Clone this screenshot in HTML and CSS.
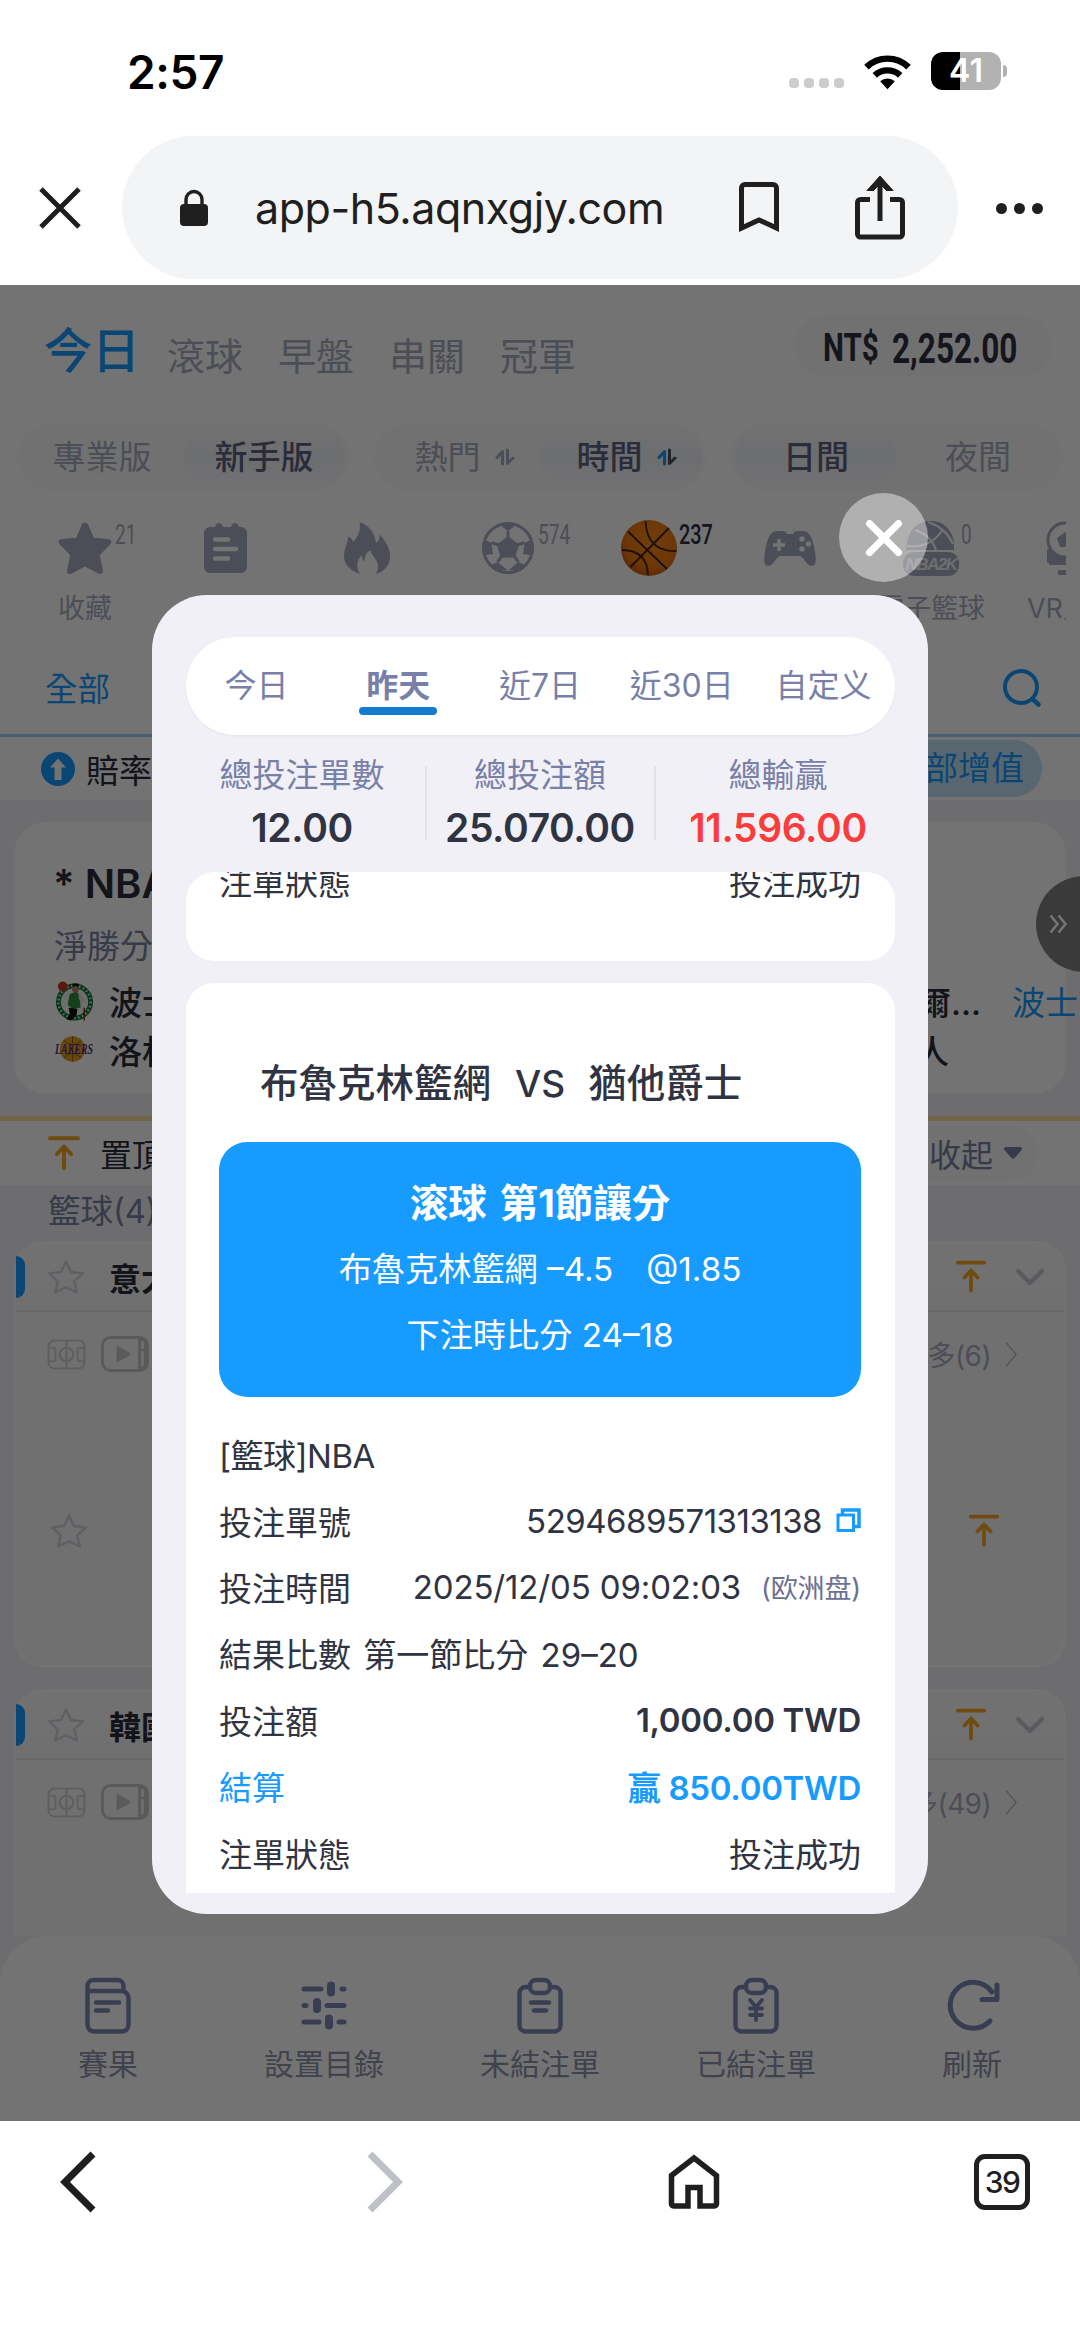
FILE: index.html
```html
<!DOCTYPE html>
<html lang="zh-Hant">
<head>
<meta charset="utf-8">
<title>已結注單</title>
<link rel="stylesheet" href="styles.css">
</head>
<body>
<svg class="defs" aria-hidden="true">
  <symbol id="star-line" viewBox="0 0 40 35"><path d="M20 2.500l5 10.600 12 1.300-8.800 8 2.600 11L20 28.500 9.200 33.400l2.600-11L3 14.400l12-1.300z" fill="none" stroke="currentColor" stroke-width="2.500" stroke-linejoin="round"/></symbol>
  <symbol id="to-top" viewBox="0 0 32 34"><path d="M2 2.200h28M16 32V11M9 18l7-7.500 7 7.500" fill="none" stroke="currentColor" stroke-width="4" stroke-linecap="round" stroke-linejoin="round"/></symbol>
  <symbol id="chev-down" viewBox="0 0 30 18"><path d="M3 3l12 12L27 3" fill="none" stroke="currentColor" stroke-width="4.500" stroke-linecap="round" stroke-linejoin="round"/></symbol>
  <symbol id="chev-right" viewBox="0 0 14 28"><path d="M1 1l11 13L1 27" fill="none" stroke="currentColor" stroke-width="1.600"/></symbol>
  <symbol id="pitch" viewBox="0 0 40 32"><g fill="none" stroke="currentColor" stroke-width="2.200"><rect x="1.500" y="1.500" width="37" height="29" rx="6"/><circle cx="20" cy="16" r="7"/><path d="M20 2v28M2 9h4.500a2 2 0 0 1 2 2v10a2 2 0 0 1-2 2H2M38 9h-4.500a2 2 0 0 0-2 2v10a2 2 0 0 0 2 2H38"/></g></symbol>
  <symbol id="play" viewBox="0 0 48 36"><rect x="1.500" y="1.500" width="45" height="33" rx="8" fill="none" stroke="currentColor" stroke-width="2.800"/><path d="M37 1h3a7 7 0 0 1 7 7v20a7 7 0 0 1-7 7h-3z" fill="currentColor"/><path d="M41.500 6v6M41.500 16v13" stroke="#f8f8f8" stroke-width="2.600" stroke-linecap="round"/><path d="M15.500 11.500v13q0 2 2 1l11-6q2-1.500 0-2.800l-11-6.200q-2-1-2 1z" fill="currentColor"/></symbol>
  <symbol id="swap" viewBox="0 0 20 18"><path d="M2 9.500L7.500 3.500V16" fill="none" stroke="currentColor" stroke-width="3" stroke-linecap="round" stroke-linejoin="round"/><path d="M12.500 2v13.500L18 10" fill="none" stroke-width="3" stroke-linecap="round" stroke-linejoin="round"/></symbol>
</svg>

<header class="status">
  <span class="clock">2:57</span>
  <div class="signals">
    <span class="cell"><i></i><i></i><i></i><i></i></span>
    <svg class="wifi" viewBox="0 0 48 36"><g fill="none" stroke="#000" stroke-width="6.500"><path d="M2.500 13a31 31 0 0 1 43 0"/><path d="M11 21.500a19 19 0 0 1 26 0"/></g><path d="M24 35.500l-7.500-8a11 11 0 0 1 15 0z"/></svg>
    <span class="battery"><b>41</b></span><span class="tip"></span>
  </div>
</header>

<div class="address">
  <svg class="quit" viewBox="0 0 44 44"><path d="M3 3l38 38M41 3L3 41" stroke="#1f1f1f" stroke-width="5"/></svg>
  <div class="url">
    <svg class="lock" viewBox="0 0 28 36"><rect y="14" width="28" height="22" rx="4" fill="#1f1f1f"/><path d="M6 15V9.500a8 8 0 0 1 16 0V15" fill="none" stroke="#1f1f1f" stroke-width="3.400"/></svg>
    <span class="host">app-h5.aqnxgjy.com</span>
    <svg class="mark" viewBox="0 0 40 50"><path d="M2.500 46V6a3.500 3.500 0 0 1 3.500-3.500h28A3.500 3.500 0 0 1 37.500 6v40L20 38z" fill="none" stroke="#1f1f1f" stroke-width="5"/></svg>
    <svg class="share" viewBox="0 0 50 64"><path d="M15 23.500H5.500a3 3 0 0 0-3 3V58a3 3 0 0 0 3 3h39a3 3 0 0 0 3-3V26.500a3 3 0 0 0-3-3H35M25 45V6" fill="none" stroke="#1f1f1f" stroke-width="5"/><path d="M25 0l13 14.500h-6.500L25 8l-6.500 6.500H12z" fill="#1f1f1f" stroke="#1f1f1f" stroke-width="1"/></svg>
  </div>
  <span class="more"><i></i><i></i><i></i></span>
</div>

<main class="app">
  <nav class="kinds">
    <span class="on">今日</span><span>滾球</span><span>早盤</span><span>串關</span><span>冠軍</span>
    <div class="wallet"><b class="cur">NT$</b><b class="sum">2,252.00</b></div>
  </nav>

  <div class="segments">
    <div class="seg"><span>專業版</span><span class="on">新手版</span></div>
    <div class="seg sort"><span>熱門<svg class="swap"><use href="#swap"/></svg></span><span class="on">時間<svg class="swap lit"><use href="#swap"/></svg></span></div>
    <div class="seg"><span class="on">日間</span><span>夜間</span></div>
  </div>

  <div class="sports">
    <div class="sport">
      <svg viewBox="0 0 56 56"><path d="M28 2.500c1.800 0 2.600 1 3.300 2.600l5.500 12.700 14.400 1.300c3.500.3 4.300 3 2 5.300L42.800 35l3 15c.6 3.500-1.500 5-4.500 3.400L28 46.500l-13.300 6.900c-3 1.600-5.100.1-4.500-3.400l3-15L2.800 24.400c-2.300-2.300-1.500-5 2-5.300l14.400-1.300 5.500-12.700c.7-1.600 1.500-2.600 3.300-2.600z" fill="currentColor"/></svg>
      <b class="badge">21</b><span>收藏</span>
    </div>
    <div class="sport">
      <svg viewBox="0 0 56 56"><path d="M12 7h5q1-4 4-4t4 4h8q1-4 4-4t4 4h2a6 6 0 0 1 6 6v34a6 6 0 0 1-6 6H12a6 6 0 0 1-6-6V13a6 6 0 0 1 6-6z" fill="currentColor"/><path d="M17 19.500h13M17 29h21M17 38.500h13" stroke="#fff" stroke-width="4.500" stroke-linecap="round"/></svg>
    </div>
    <div class="sport">
      <svg viewBox="0 0 56 56"><path d="M21 54C9 50 3 42 5.500 31c1-4.500 3.500-8 3.500-14.500 3 1 4.500 3 5 5.500 5-5 8-11 6.500-20 9 3 15 10 16.500 21 3-2 4-5 3.500-8.500C47 21 51 29 51 36c0 9-5 15-14 18 4-7 2-12-2-17-1.500-2-3-4-3.500-6.500-5 2-5.500 6-6 11-2-1.500-2.500-3.500-2.500-6.500-6 6-6 12-2 19z" fill="currentColor"/></svg>
    </div>
    <div class="sport">
      <svg viewBox="0 0 56 56"><circle cx="28" cy="28" r="24.500" fill="none" stroke="currentColor" stroke-width="3"/><path d="M28 18l9.500 7-3.600 11H22l-3.500-11zM28 18v-7M37.500 25l7-2.500M34 36l4.500 6M22 36l-4.500 6M18.500 25l-7-2.500" fill="currentColor" stroke="currentColor" stroke-width="3"/><path d="M20 5l8 6 8-6zM51 20l-6.500 3-1.500 11 8 1zM38 42l-9 8 10 1 6-6zM17.500 42l10 8-10 1-6-6zM5 20l6.500 3 1.500 11-8 1z" fill="currentColor"/></svg>
      <b class="badge">574</b>
    </div>
    <div class="sport picked">
      <svg viewBox="0 0 56 56"><defs><radialGradient id="ball" cx=".55" cy=".4" r=".65"><stop offset="0" stop-color="#f98a1c"/><stop offset=".7" stop-color="#ee7a10"/><stop offset="1" stop-color="#c65512"/></radialGradient></defs><circle cx="28" cy="28" r="28" fill="url(#ball)"/><g fill="none" stroke="#40230d" stroke-width="1.800"><path d="M7 11.500L46 49M48 8L9.500 47M24.500 1Q26 32 55.500 31M1 30q25 0 26 25"/></g></svg>
      <b class="badge">237</b>
    </div>
    <div class="sport">
      <svg viewBox="0 0 56 56"><path d="M15 11h6q3 0 4 3h6q1-3 4-3h6c7 0 10 8 12 21 1.500 9 1 14-3.500 14-5 0-7-9-12-10h-19c-5 1-7 10-12 10C2 46 1.500 41 3 32c2-13 5-21 12-21z" fill="currentColor"/><path d="M17 19v12M11 25h12" stroke="#fff" stroke-width="3.600"/><g fill="#fff"><circle cx="40" cy="19" r="2.700"/><circle cx="40" cy="29" r="2.700"/><circle cx="46.500" cy="24" r="2.700"/></g></svg>
    </div>
    <div class="sport">
      <svg viewBox="0 0 56 56"><path d="M3 30C4 10 14 1 28 1s23 10 24 29z" fill="currentColor"/><path d="M12 10q16 5 21 20M4 26q24 3 36-17M25 2q18 6 25 22M52 22v10" fill="none" stroke="#fff" stroke-width="2"/><rect x="0" y="32" width="56" height="24" rx="11" fill="currentColor"/><text x="28" y="50" text-anchor="middle" class="nba">NBA2K</text></svg>
      <b class="badge">0</b><span>電子籃球</span>
    </div>
    <div class="sport">
      <svg viewBox="0 0 56 56"><circle cx="21" cy="20" r="17" fill="none" stroke="currentColor" stroke-width="3"/><path d="M21 12l8 6-3 9H16l-3-9zM3 29l18 9h33v5H3zM14 50h20v5H14zM3 29h3v14H3z" fill="currentColor"/><path d="M5 32l14 8h33l2 5H5z" fill="currentColor"/></svg>
      <span>VR足球</span>
    </div>
  </div>

  <div class="leagues"><span>全部</span><svg viewBox="0 0 38 38"><circle cx="18" cy="18" r="16" fill="none" stroke="currentColor" stroke-width="4"/><path d="M29.500 30l6 5.500" stroke="currentColor" stroke-width="4.500" stroke-linecap="round"/></svg></div>

  <div class="boost">
    <svg viewBox="0 0 34 34"><circle cx="17" cy="17" r="17" fill="#189bff"/><path d="M17 6.500l8 9h-4.500V28h-7V15.500H9z" fill="#fff"/></svg>
    <span>賠率</span><b>全部增值</b>
  </div>

  <section class="feature">
    <h2>* NBA</h2>
    <p>淨勝分</p>
    <div class="team">
      <svg viewBox="0 0 40 42"><circle cx="20" cy="22" r="16.500" fill="#f4f4f0" stroke="#0c7a41" stroke-width="5"/><circle cx="20" cy="22" r="16.500" fill="none" stroke="#dfe9e0" stroke-width="2.500" stroke-dasharray="1.500 2.600"/><circle cx="8" cy="6" r="5" fill="#c9391f"/><path d="M15 14l7-3 4 5v12l-8 1-5-4z" fill="#2f8a3c"/><path d="M18 3h6v4h-6zM14 28l9 1-1 7-6 5-4-1 3-6z" fill="#111"/><path d="M25 12l6 9-4 4-3-8z" fill="#e9e4dc"/><circle cx="21" cy="9" r="3.500" fill="#b4835c"/><path d="M30 28v13" stroke="#7b2f22" stroke-width="1.500"/></svg>
      <b>波士頓</b><b class="dots">爾…</b><em>波士頓</em>
    </div>
    <div class="team">
      <svg viewBox="0 0 40 42"><circle cx="18" cy="20" r="13" fill="#e0a31a"/><path d="M18 7v26M9 11q9 9 18 0M9 29q9-9 18 0" fill="none" stroke="#8d5f14" stroke-width="1"/><text x="0" y="25" textLength="39" lengthAdjust="spacingAndGlyphs" class="lakers">LAKERS</text></svg>
      <b>洛杉磯</b><b class="dots">人</b>
    </div>
  </section>

  <div class="pinned"><svg><use href="#to-top"/></svg><span>置頂</span><b>收起<svg viewBox="0 0 20 14"><path d="M2.500 1h15q2.500 1 1 3l-7 8q-1.500 1.500-3 0l-7-8q-1.500-2 1-3z" fill="currentColor"/></svg></b></div>
  <div class="group">籃球(4)</div>

  <section class="match">
    <header><i></i><svg class="fav"><use href="#star-line"/></svg><b>意大利</b><svg class="top"><use href="#to-top"/></svg><svg class="fold"><use href="#chev-down"/></svg></header>
    <div class="tools"><svg class="pitch"><use href="#pitch"/></svg><svg class="play"><use href="#play"/></svg><span>更多(6)</span><svg class="go"><use href="#chev-right"/></svg></div>
    <div class="watch"><svg class="fav"><use href="#star-line"/></svg><svg class="top"><use href="#to-top"/></svg></div>
  </section>
  <section class="match last">
    <header><i></i><svg class="fav"><use href="#star-line"/></svg><b>韓國籃</b><svg class="top"><use href="#to-top"/></svg><svg class="fold"><use href="#chev-down"/></svg></header>
    <div class="tools"><svg class="pitch"><use href="#pitch"/></svg><svg class="play"><use href="#play"/></svg><span>更多(49)</span><svg class="go"><use href="#chev-right"/></svg></div>
  </section>

  <nav class="dock">
    <div><svg viewBox="0 0 46 56"><g fill="none" stroke="currentColor" stroke-width="4.500" stroke-linecap="round"><path d="M2.500 13V8a6 6 0 0 1 6-6h24a6 6 0 0 1 6 6v5M2.500 13h34a7 7 0 0 1 7 7v27a6.500 6.500 0 0 1-6.500 6.500H9A6.500 6.500 0 0 1 2.500 47z"/><path d="M11 24.500h23M11 32.500h12"/></g></svg><span>賽果</span></div>
    <div><svg viewBox="0 0 46 56"><g fill="none" stroke="currentColor" stroke-width="5" stroke-linecap="round"><path d="M3 11h17M41 11h2M3 27.500h2M26 27.500h17M3 44h15M38 44h5"/><path d="M30 7.500v7M16 24v7M28 40.500v7" stroke-width="8"/></g></svg><span>設置目錄</span></div>
    <div><svg viewBox="0 0 46 56"><g fill="none" stroke="currentColor" stroke-width="4.500" stroke-linecap="round"><path d="M12 9H8.500A6 6 0 0 0 2.500 15v32.500a6 6 0 0 0 6 6h29a6 6 0 0 0 6-6V15a6 6 0 0 0-6-6H34"/><rect x="13" y="2" width="20" height="13" rx="6"/><path d="M14 24.500h18M17 32.500h12"/></g></svg><span>未結注單</span></div>
    <div><svg viewBox="0 0 46 56"><g fill="none" stroke="currentColor" stroke-width="4.500" stroke-linecap="round"><path d="M12 9H8.500A6 6 0 0 0 2.500 15v32.500a6 6 0 0 0 6 6h29a6 6 0 0 0 6-6V15a6 6 0 0 0-6-6H34"/><rect x="13" y="2" width="20" height="13" rx="6"/><path d="M17 22l6 7 6-7M23 29v13M17 30.500h12M17 37h12" stroke-width="3.800"/></g></svg><span>已結注單</span></div>
    <div><svg class="wide" viewBox="0 0 56 56"><path d="M46 43a23 23 0 1 1 2-29" fill="none" stroke="currentColor" stroke-width="5" stroke-linecap="round"/><path d="M53 7v14.500H38" fill="none" stroke="currentColor" stroke-width="5" stroke-linecap="round" stroke-linejoin="round"/></svg><span>刷新</span></div>
  </nav>

  <span class="handle"><svg viewBox="0 0 18 20"><path d="M1.500 1.500l7 8.500-7 8.500M9.500 1.500l7 8.500-7 8.500" fill="none" stroke="#fff" stroke-width="2.600"/></svg></span>

  <div class="shade"></div>
  <button class="close" aria-label="close"><svg viewBox="0 0 36 36"><path d="M3.500 3.500l29 29M32.500 3.500l-29 29" stroke="#fff" stroke-width="7" stroke-linecap="round"/></svg></button>

  <section class="sheet">
    <nav class="range"><span>今日</span><span class="on">昨天</span><span>近7日</span><span>近30日</span><span>自定义</span></nav>
    <div class="totals">
      <div><span>總投注單數</span><b>12.00</b></div>
      <div><span>總投注額</span><b>25.070.00</b></div>
      <div><span>總輸贏</span><b class="win">11.596.00</b></div>
    </div>
    <div class="bets">
      <article class="bet prev"><div class="row"><span>注單狀態</span><span>投注成功</span></div></article>
      <article class="bet">
        <h3>布魯克林籃網<span>VS</span>猶他爵士</h3>
        <div class="pick"><b>滚球 第1節讓分</b><span>布魯克林籃網 –4.5<i></i>@1.85</span><span>下注時比分 24–18</span></div>
        <div class="row"><span class="code">[籃球]NBA</span></div>
        <div class="row"><span>投注單號</span><span class="code">5294689571313138<svg class="copy" viewBox="0 0 25 25"><path d="M2 7h15.500v15.500H2z" fill="none" stroke="#189bff" stroke-width="3"/><path d="M6.500 6V2H23v16.500h-4" fill="none" stroke="#189bff" stroke-width="3.500"/></svg></span></div>
        <div class="row"><span>投注時間</span><span class="when">2025/12/05 09:02:03<small>(欧洲盘)</small></span></div>
        <div class="row"><span class="score">結果比數 第一節比分 29–20</span></div>
        <div class="row"><span>投注額</span><b>1,000.00 TWD</b></div>
        <div class="row won"><span>結算</span><b>贏 850.00TWD</b></div>
        <div class="row"><span>注單狀態</span><span>投注成功</span></div>
      </article>
    </div>
  </section>
</main>

<footer class="browser">
  <svg class="back" viewBox="0 0 36 62"><path d="M33 3L5 31l28 28" fill="none" stroke="#1f1f1f" stroke-width="7"/></svg>
  <svg class="fwd" viewBox="0 0 36 62"><path d="M3 3l28 28L3 59" fill="none" stroke="#bdc1c6" stroke-width="7"/></svg>
  <svg class="home" viewBox="0 0 50 54"><path d="M2.500 20.500L25 3l22.500 17.500V49a2 2 0 0 1-2 2H31V32.500H19V51H4.500a2 2 0 0 1-2-2z" fill="none" stroke="#1f1f1f" stroke-width="5.500"/></svg>
  <span class="tabs">39</span>
</footer>
</body>
</html>
```
FILE: styles.css
```css
* { box-sizing: border-box; }
body {
  margin: 0;
  width: 1080px;
  height: 2337px;
  overflow: hidden;
  background: #fff;
  color: #303442;
  font-family: Inter, "Noto Sans CJK TC", sans-serif;
  font-size: 33px;
}
h2, h3, p { margin: 0; }
svg { display: block; flex: none; overflow: visible; }
.defs { position: absolute; width: 0; height: 0; }

/* status bar */
.status { height: 136px; display: flex; padding: 0 73px 0 127px; }
.clock { color: #000; font-size: 46px; font-weight: 600; line-height: 60px; margin-top: 42px; letter-spacing: -.4px; }
.signals { margin-left: auto; display: flex; height: 38px; margin-top: 52px; }
.cell { display: flex; gap: 5px; align-self: flex-end; margin: 0 20px 2px 0; }
.cell i { width: 10px; height: 10px; border-radius: 4px; background: #ccc; }
.wifi { width: 47px; height: 36px; margin: 2px 20px 0 0; }
.battery {
  width: 70px; height: 38px; border-radius: 12px;
  background: linear-gradient(90deg, #000 29px, #b2b2b2 29px);
  color: #fff; font-size: 32px; line-height: 38px; text-align: center;
}
.battery b { font-weight: 600; }
.tip { width: 4px; height: 12px; margin: 13px 0 0 2px; border-radius: 0 4px 4px 0; background: #b2b2b2; }

/* address bar */
.address { height: 149px; display: flex; align-items: flex-start; padding: 0 37px 0 38px; }
.quit { width: 44px; height: 44px; margin: 50px 40px 0 0; }
.url { width: 836px; height: 143px; border-radius: 72px; background: #f3f4f6; display: flex; padding-left: 58px; }
.lock { width: 28px; height: 36px; margin: 54px 47px 0 0; }
.host { width: 484px; color: #1f1f1f; font-size: 43px; line-height: 144px; letter-spacing: -.45px; }
.mark { width: 40px; height: 50px; margin: 46px 76px 0 0; }
.share { width: 50px; height: 64px; margin-top: 40px; }
.more { display: flex; gap: 7px; margin: 67px 0 0 38px; }
.more i { width: 11px; height: 11px; border-radius: 50%; background: #1f1f1f; }

/* page behind the sheet */
.app { position: relative; height: 1836px; overflow: hidden; background: #f2f2f6; color: #2b2d3a; }
.kinds { height: 139px; background: #fff; display: flex; padding: 0 28px 0 44px; color: #a9adc0; font-size: 38px; align-items: flex-start; }
.kinds span { line-height: 60px; margin: 41px 35px 0 0; }
.kinds .on { color: #189bff; font-size: 48px; font-weight: 500; margin: 36px 27px 0 0; }
.wallet { margin: 30px 0 0 auto; width: 258px; height: 62px; border-radius: 31px; background: #fafafa; color: #2f3240; padding-left: 29px; font-family: Roboto, sans-serif; display: flex; }
.wallet b { transform-origin: 0 50%; line-height: 66px; }
.cur { font-size: 39px; transform: scaleX(.76); width: 69px; }
.sum { font-size: 42px; transform: scaleX(.75); width: 125px; }
.wallet .sum { line-height: 68px; }

.segments { height: 66px; padding: 0 17px; display: flex; justify-content: space-between; background: #fff; font-size: 33px; }
.seg { width: 332px; padding: 4px; border-radius: 33px; background: #fafafa; display: flex; color: #a9adc0; }
.seg span { flex: 1; display: flex; align-items: center; justify-content: center; border-radius: 29px; line-height: 58px; }
.seg .on { background: linear-gradient(#fcfcfd, #f0f2f8 50%, #fbfcfd); color: #5f6280; font-weight: 500; }
.sort span { padding-left: 11px; }
.swap { width: 20px; height: 18px; margin: 0 0 0 14px; stroke: #a9adc0; }
.lit { color: #189bff; stroke: #4a5068; }

.sports { height: 142px; padding: 29px 0 0 14.500px; margin-right: 14px; display: flex; overflow: hidden; color: #a9adc0; font-size: 27px; box-shadow: 14px 0 #fff; background: #fff; }
.sport { position: relative; width: 141px; flex: none; display: flex; flex-direction: column; align-items: center; }
.sport svg { width: 56px; height: 56px; margin-top: 1px; }
.sport span { line-height: 40px; margin-top: 13px; white-space: nowrap; }
.badge { position: absolute; left: 100px; top: 0; font: 400 28px/32px Roboto, sans-serif; transform: scaleX(.68); transform-origin: 0 50%; }
.picked .badge { color: #2f3240; font-weight: 500; transform: scaleX(.71); }
.nba { font: italic 700 17px "Liberation Sans", sans-serif; fill: #f3f3f6; letter-spacing: -1.500px; }

.leagues { height: 105px; padding: 0 39px 0 45px; border-bottom: 3px solid #9fd5ff; background: #fff; display: flex; justify-content: space-between; align-items: center; color: #189bff; font-size: 32.500px; }
.leagues span { margin-top: 7px; }
.leagues svg { width: 38px; height: 38px; margin-top: 9px; }
.boost { height: 63px; background: #fff; display: flex; align-items: center; padding: 0 38px 0 41px; }
.boost svg { width: 34px; height: 34px; }
.boost span { margin-left: 11px; }
.boost b { margin-left: auto; height: 57px; border-radius: 28px; padding: 0 18px; background: #c4e3f8; color: #189bff; font-weight: 400; line-height: 57px; }

.feature { height: 272px; margin: 22px 14px; border-radius: 32px; background: #fff; padding: 33px 0 0 41px; }
.feature h2 { font-size: 40px; line-height: 58px; font-weight: 600; margin-left: -2px; }
.feature p { color: #7b80a0; line-height: 50px; margin: 8px 0 5px -1px; }
.team { display: flex; align-items: center; height: 49px; white-space: nowrap; }
.team svg { width: 39px; height: 42px; }
.team b { flex: none; font-weight: 500; margin-left: 15px; width: 99px; }
.team .dots { margin-left: 710px; width: 94px; }
.team em { flex: none; color: #189bff; font-style: normal; }
.team + .team .dots { margin-left: 708px; }
.lakers { font: italic 700 14px "Liberation Serif", serif; fill: #5b2a8a; }

.pinned { height: 69px; border-top: 5px solid #ffdfa0; background: #fff; display: flex; align-items: center; padding: 0 42px 0 48px; font-size: 32px; }
.pinned > svg { width: 32px; height: 34px; color: #f5a623; }
.pinned span { margin-left: 20px; }
.pinned b { margin-left: auto; width: 140px; height: 56px; border-radius: 28px; background: #fafafa; display: flex; align-items: center; justify-content: flex-end; padding-right: 15px; gap: 10px; color: #7b80a0; font-weight: 400; }
.pinned b svg { width: 20px; height: 14px; }
.group { height: 56px; padding-left: 48px; line-height: 53px; color: #7b80a0; font-size: 32.500px; }

.match { height: 426px; margin: 0 14px 22px; border: 2px solid #fff; border-radius: 30px; background: #f8f8f8; }
.match header { height: 69px; border-bottom: 2px solid #e9e9f2; display: flex; align-items: center; padding-right: 19px; background: linear-gradient(#fcfcfc, #f8f8f8); border-radius: 30px 30px 0 0; }
.match i { width: 9px; height: 42px; border-radius: 0 14px 14px 0; background: #189bff; }
.fav { width: 40px; height: 35px; margin-left: 21px; color: #d3d5e2; }
.match b { margin-left: 23px; font-size: 32px; }
.top { width: 30px; height: 33px; color: #f5a623; margin: 0 29px 0 auto; }
.fold { width: 30px; height: 18px; color: #c6c9d8; }
.tools { height: 84px; display: flex; align-items: center; padding: 0 46px 0 31px; font-size: 28px; color: #a9adc0; }
.pitch { width: 39px; height: 31px; color: #d0d3d3; }
.play { width: 48px; height: 36px; margin-left: 15px; color: #c6c9c9; }
.tools span { margin-left: auto; letter-spacing: -.6px; }
.go { width: 13px; height: 27px; margin-left: 14px; color: #bdbfca; }
.watch { display: flex; align-items: center; height: 268px; padding: 0 36px 0 12px; }
.watch .top { margin-right: 29px; }
.last { height: 246px; margin-bottom: 0; border-bottom: 0; border-radius: 30px 30px 0 0; }

.dock { height: 186px; margin-top: 1px; border-radius: 48px 48px 0 0; background: #fff; display: flex; padding-top: 42px; color: #7f88b4; font-size: 30px; }
.dock div { width: 216px; display: flex; flex-direction: column; align-items: center; }
.dock svg { width: 46px; height: 56px; }
.dock .wide { width: 56px; }
.dock span { line-height: 40px; margin-top: 10px; color: #8f93ab; }

.handle { position: absolute; left: 1036px; top: 591px; width: 96px; height: 96px; border-radius: 50%; background: #808080; }
.handle svg { width: 18px; height: 20px; margin: 38px 0 0 13px; }

/* bet history sheet */
.shade { position: absolute; inset: 0; background: rgba(0, 0, 0, .55); }
.close { position: absolute; left: 839px; top: 208px; width: 89px; height: 89px; border: 0; padding: 0; border-radius: 50%; background: rgba(255, 255, 255, .44); display: grid; place-items: center; }
.close svg { width: 36px; height: 36px; }
.sheet { position: absolute; left: 152px; top: 310px; width: 776px; height: 1319px; padding: 42px 33.500px 21px; border-radius: 55px; background: #f1f0f6; color: #303442; display: flex; flex-direction: column; }
.range { height: 98px; border-radius: 49px; background: #fff; box-shadow: 0 1px 2px rgba(80, 80, 120, .08); display: flex; color: #7980a8; font-size: 32px; }
.range span { flex: 1; display: flex; flex-direction: column; align-items: center; line-height: 46px; padding-top: 26px; }
.range .on { font-weight: 700; }
.range .on::after { content: ""; width: 78px; height: 8px; margin-top: -2px; border-radius: 4px; background: #137bd0; }
.totals { height: 137px; display: grid; grid-template-columns: 239px 229px 241px; padding-top: 18px; }
.totals div { display: flex; flex-direction: column; align-items: center; }
.totals div + div { background: linear-gradient(#e0e4ea, #e0e4ea) 0 13px / 2px 74px no-repeat; }
.totals span { color: #7980a8; line-height: 44px; }
.totals div:nth-child(2) { padding-left: 2px; }
.totals div:first-child { padding-right: 6px; }
.totals div:last-child { padding-left: 8px; }
.totals b { font-size: 39px; font-weight: 600; line-height: 52px; margin-top: 5px; letter-spacing: -.4px; }
.totals .win { color: #f93c3c; }
.bets { flex: 1; overflow: hidden; border-radius: 28px 28px 0 0; }
.bet { background: #fff; border-radius: 28px; padding: 0 33.500px 72px; margin-bottom: 22px; }
.prev { display: flow-root; height: 89px; padding-bottom: 0; }
.prev .row { margin-top: -24px; }
.bet h3 { font-size: 38.500px; font-weight: 500; line-height: 60px; padding: 70px 0 28px 41px; white-space: nowrap; }
.bet h3 span { margin: 0 23px 0 24px; font-size: 37px; }
.pick { height: 255px; margin-bottom: 24px; border-radius: 28px; background: #189bff; color: #fff; display: flex; flex-direction: column; align-items: center; padding-top: 28px; line-height: 66px; font-size: 33.200px; }
.pick b { font-size: 38.500px; word-spacing: 4px; }
.pick i { display: inline-block; width: 33px; }
.row { height: 66.400px; display: flex; justify-content: space-between; align-items: center; white-space: nowrap; }
.row span { display: flex; align-items: center; }
.row b { font-weight: 600; letter-spacing: -.3px; }
.code { letter-spacing: -.5px; }
.when { letter-spacing: -.15px; }
.row .score { white-space: pre; word-spacing: 3px; }
.copy { width: 25px; height: 25px; margin-left: 14px; }
.row small { font-size: 27px; color: #6c7094; margin-left: 20px; }
.won { color: #189bff; }

/* browser toolbar */
.browser { height: 216px; background: #fff; display: flex; align-items: flex-start; padding: 30px 50px 0 60px; }
.back, .fwd { width: 36px; height: 62px; }
.fwd { margin-left: 271px; }
.home { width: 50px; height: 54px; margin: 4px 0 0 266px; }
.tabs { margin: 3px 0 0 auto; width: 56px; height: 56px; border: 5px solid #1f1f1f; border-radius: 11px; color: #1f1f1f; font: 500 30px/46px Inter, sans-serif; letter-spacing: -1.500px; text-align: center; }
```
